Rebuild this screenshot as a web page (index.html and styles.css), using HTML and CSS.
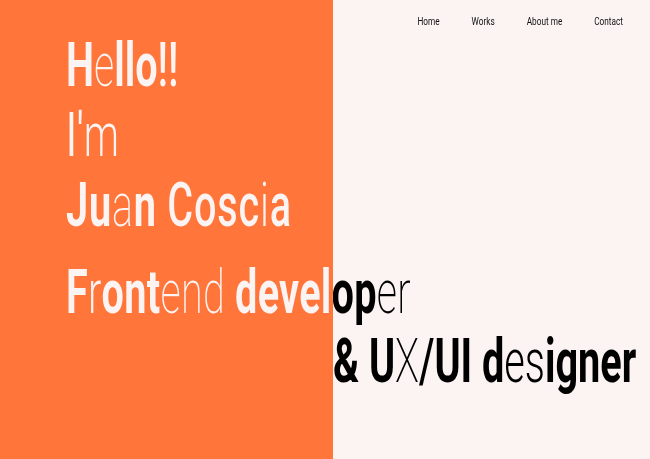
FILE: index.html
```html
<!DOCTYPE html>
<html lang="en">
<head>
<meta charset="utf-8">
<title>Juan Coscia</title>
<link rel="stylesheet" href="styles.css">
</head>
<body>
<header class="top">
  <nav class="nav">
    <a href="#">Home</a>
    <a href="#">Works</a>
    <a href="#">About me</a>
    <a href="#">Contact</a>
  </nav>
</header>
<main class="hero">
  <h1 class="title">
    <span class="line"><b class="w7">H</b><b class="w2">e</b><b class="w7">llo</b><b class="w5">!!</b></span>
    <span class="line"><b class="w4">I'</b><b class="w3">m</b></span>
    <span class="line wide"><b class="w7">Ju</b><b class="w2">a</b><b class="w7">n</b> <b class="w5">Cosc</b><b class="w3">i</b><b class="w5">a</b></span>
  </h1>
  <h2 class="role">
    <span class="line snug"><b class="w7">F</b><b class="w3">r</b><b class="w7">ont</b><b class="w2">end</b> <b class="w7">develop</b><b class="w2">er</b></span>
    <span class="line indent"><b class="w7">&amp; U</b><b class="w2">X</b><b class="w5">/</b><b class="w7">UI</b> <b class="w7">d</b><b class="w3">es</b><b class="w7">igner</b></span>
  </h2>
</main>
</body>
</html>
```
FILE: styles.css
```css
* { box-sizing: border-box; }
html, body { margin: 0; padding: 0; }
body {
  width: 650px;
  height: 459px;
  overflow: hidden;
  font-family: Roboto, "Liberation Sans", sans-serif;
  background: linear-gradient(90deg, #ff753a 0, #ff753a 333px, #fcf3f3 333px, #fcf3f3 100%);
}
.top {
  display: flex;
  justify-content: flex-end;
  padding: 16px 27px 0 0;
  height: 31px;
}
.nav {
  display: flex;
  gap: 40px;
  transform: scaleX(0.8);
  transform-origin: right top;
}
.nav a {
  font-size: 10.3px;
  line-height: 12px;
  color: #111;
  text-decoration: none;
}
.hero {
  transform: scaleX(0.65);
  transform-origin: 0 0;
  width: 1000px;
  padding-left: 101.5px;
  background: linear-gradient(90deg, #fcf3f3 0, #fcf3f3 512.3px, #000 512.3px, #000 100%);
  -webkit-background-clip: text;
  background-clip: text;
  color: transparent;
}
.title, .role {
  margin: 0;
  font-size: 61px;
  font-weight: 400;
}
.title { line-height: 70px; margin-top: -1px; }
.role { line-height: 69px; margin-top: 18px; }
.line { display: block; white-space: nowrap; }
.wide { letter-spacing: 1.2px; }
.snug { letter-spacing: 0.4px; }
.indent { padding-left: 410.8px; }
b { font-weight: 400; }
.w2 { font-weight: 200; }
.w3 { font-weight: 300; }
.w4 { font-weight: 400; }
.w5 { font-weight: 500; }
.w7 { font-weight: 700; }
```
